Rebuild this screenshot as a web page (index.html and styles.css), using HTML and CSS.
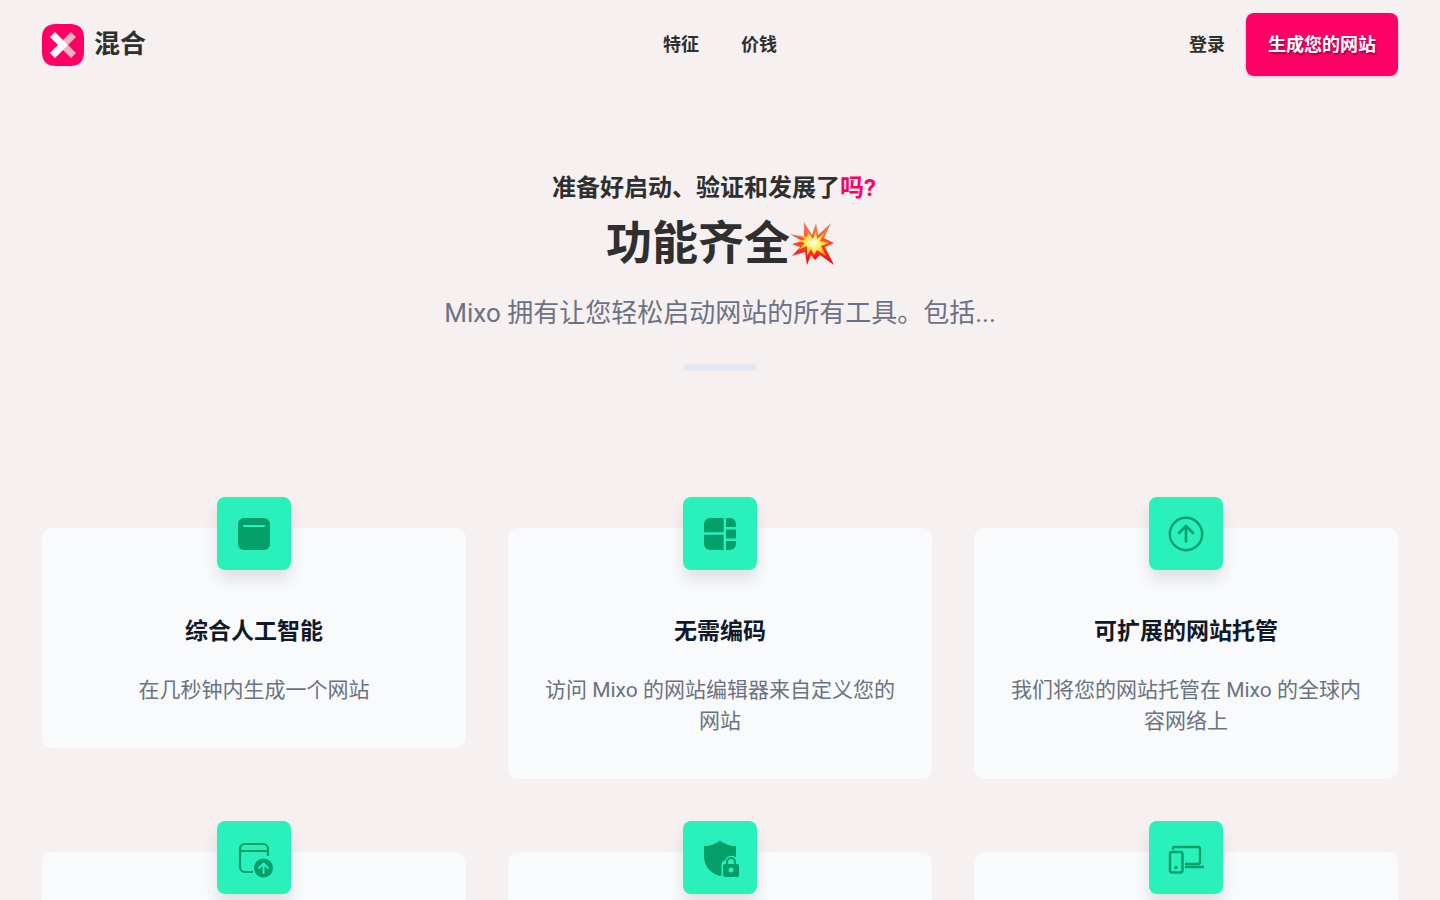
FILE: index.html
```html
<!DOCTYPE html>
<html lang="zh-CN">
<head>
    <meta charset="UTF-8">
    <meta name="viewport" content="width=device-width, initial-scale=1.0">
    <title>混合</title>
    <link rel="stylesheet" href="styles.css">
</head>
<body>
    <header class="header">
        <div class="header-side">
            <a class="logo" href="#">
                <svg class="logo-mark" viewBox="0 0 42 42" aria-hidden="true">
                    <path fill="#ff0065" d="M14 0h14Q42 0 42 14v14q0 14-14 14H14Q0 42 0 28V14Q0 0 14 0z"/>
                    <path fill="#f0b3bd" d="M29 8l5 5-8 8 8 8-5 5-13-13z"/>
                    <path fill="#fff" d="M13 8l13 13-13 13-5-5 8-8-8-8z"/>
                </svg>
                <span>混合</span>
            </a>
        </div>
        <nav class="nav">
            <a href="#">特征</a>
            <a href="#">价钱</a>
        </nav>
        <div class="header-side header-right">
            <a class="login" href="#">登录</a>
            <button class="btn" type="button">生成您的网站</button>
        </div>
    </header>

    <main>
        <section class="hero">
            <p class="hero-top">准备好启动、验证和发展了<span class="pink">吗?</span></p>
            <h1>功能齐全<svg class="boom" viewBox="0 0 44 46" aria-hidden="true">
                    <defs>
                        <linearGradient id="boomRed" x1="0" y1="0" x2="0" y2="1">
                            <stop offset="0" stop-color="#ee8560"/>
                            <stop offset=".5" stop-color="#fb4a22"/>
                            <stop offset="1" stop-color="#f5000c"/>
                        </linearGradient>
                        <radialGradient id="boomYellow">
                            <stop offset="0" stop-color="#fff"/>
                            <stop offset=".3" stop-color="#fff59a"/>
                            <stop offset=".65" stop-color="#ffdc2e"/>
                            <stop offset="1" stop-color="#ff9a2c"/>
                        </radialGradient>
                    </defs>
                    <path fill="url(#boomRed)" d="M14 2l8 13 4-12 2 12L41 3l-7 15 10 5-9 4 9 18-14-10-5 5-4-5-4 10-2-13-13 4 8-9-8-3 10-3L0 14l14 3z"/>
                    <path fill="url(#boomYellow)" d="M18 12l5 7 3-9 1 9 9-8-6 10 9 2-8 3 5 10-9-6-3 5-3-6-4 7 0-10-9 4 7-7-7-2 8-2-8-4 9 2z"/>
                </svg></h1>
            <p class="hero-text">Mixo 拥有让您轻松启动网站的所有工具。包括...</p>
            <div class="bar"></div>
        </section>

        <section class="features">
            <article class="card">
                <div class="icon">
                    <svg viewBox="0 0 40 40" aria-hidden="true">
                        <rect x="4" y="4" width="32" height="32" rx="6"/>
                        <path class="cut" stroke-width="2.200" stroke-linecap="round" d="M10 12h20"/>
                    </svg>
                </div>
                <h2>综合人工智能</h2>
                <p>在几秒钟内生成一个网站</p>
            </article>
            <article class="card">
                <div class="icon">
                    <svg viewBox="0 0 40 40" aria-hidden="true">
                        <rect x="4" y="4" width="32" height="32" rx="6"/>
                        <path class="cut" stroke-width="2.400" d="M24.800 3v34M3 19.500h21M25 14.200h12M25 25.800h12"/>
                    </svg>
                </div>
                <h2>无需编码</h2>
                <p>访问 Mixo 的网站编辑器来自定义您的网站</p>
            </article>
            <article class="card">
                <div class="icon">
                    <svg viewBox="0 0 40 40" aria-hidden="true">
                        <circle class="line" cx="20" cy="20" r="16.200" stroke-width="2.400"/>
                        <path class="line" stroke-width="2.600" stroke-linecap="round" stroke-linejoin="round" d="M20 27.500V12.500M13 19l7-7 7 7"/>
                    </svg>
                </div>
                <h2>可扩展的网站托管</h2>
                <p>我们将您的网站托管在 Mixo 的全球内容网络上</p>
            </article>
            <article class="card">
                <div class="icon">
                    <svg viewBox="0 0 40 40" aria-hidden="true">
                        <path class="line" stroke-width="2.200" d="M19 34h-8a5 5 0 0 1-5-5V11a5 5 0 0 1 5-5h18a5 5 0 0 1 5 5v7M6 13h28"/>
                        <circle cx="29.500" cy="30" r="9.500"/>
                        <path class="cut" stroke-width="2" stroke-linecap="round" stroke-linejoin="round" d="M29.500 35V25.500M25 30l4.500-4.500L34 30"/>
                    </svg>
                </div>
            </article>
            <article class="card">
                <div class="icon">
                    <svg viewBox="0 0 40 40" aria-hidden="true">
                        <path d="M20 2.500C24 6 30 8 36 8v10c0 10-6 17-16 20C10 35 4 28 4 18V8c6 0 12-2 16-5.500z"/>
                        <path class="gap" d="M21.500 40V27q0-4 3.500-4.500a6.500 6.500 0 0 1 12.500 0L41 24v16z"/>
                        <rect x="23" y="26" width="16" height="13" rx="2"/>
                        <path class="line" stroke-width="2" d="M27 27v-3a4 4 0 0 1 8 0v3"/>
                        <circle class="gap" cx="31" cy="32" r="2.500"/>
                    </svg>
                </div>
            </article>
            <article class="card">
                <div class="icon">
                    <svg viewBox="0 0 40 40" aria-hidden="true">
                        <rect class="line" x="4" y="14" width="12.500" height="20.500" rx="2" stroke-width="2.400"/>
                        <circle cx="10" cy="29.500" r="1.700"/>
                        <path class="line" stroke-width="2.300" d="M7 11.500V10q0-1 1-1h24q2 0 2 2v13q0 2-2 2H19M19 29h19"/>
                    </svg>
                </div>
            </article>
        </section>
    </main>
</body>
</html>
```
FILE: styles.css
```css
* {
    box-sizing: border-box;
}

body {
    margin: 0;
    height: 100vh;
    overflow: hidden;
    background: #f6f0f0;
    color: #2e2f2e;
    font-family: Roboto, "Noto Sans CJK SC", sans-serif;
    font-size: 21px;
    line-height: 31px;
}

h1, h2, p {
    margin: 0;
}

a {
    color: inherit;
    text-decoration: none;
}

.header {
    display: flex;
    align-items: center;
    padding: 13px 42px;
    font-size: 18px;
    font-weight: 700;
}

.header-side {
    flex: 1;
    display: flex;
    align-items: center;
}

.header-right {
    justify-content: flex-end;
    gap: 21px;
}

.logo {
    display: flex;
    align-items: center;
    gap: 10px;
    font-size: 26px;
}

.logo-mark {
    width: 42px;
    height: 42px;
}

.nav {
    display: flex;
    gap: 42px;
}

.btn {
    height: 63px;
    padding: 0 22px;
    border: 0;
    border-radius: 8px;
    background: #ff0065;
    box-shadow: 0 1px 3px rgba(0, 0, 0, .15);
    color: #fff;
    font: inherit;
    text-shadow: 1px 2px 2px rgba(0, 0, 0, .35);
}

.hero {
    display: flex;
    flex-direction: column;
    align-items: center;
    padding: 84px 42px 126px;
    text-align: center;
}

.hero-top {
    padding-right: 12px;
    font-size: 24px;
    font-weight: 700;
}

.pink {
    color: #ff0065;
}

.hero h1 {
    display: flex;
    align-items: center;
    margin-top: 8px;
    font-size: 46px;
    line-height: 62px;
}

.boom {
    width: 44px;
    height: 46px;
}

.hero-text {
    margin-top: 24px;
    color: #6b7285;
    font-size: 26px;
}

.bar {
    width: 74px;
    height: 7px;
    margin-top: 35px;
    border-radius: 4px;
    background: #e2e8f0;
}

.features {
    display: grid;
    grid-template-columns: repeat(3, 1fr);
    align-items: start;
    gap: 73px 42px;
    padding: 31px 42px 42px;
}

.card {
    min-height: 220px;
    padding: 0 31px 42px;
    border-radius: 10px;
    background: #f9fafc;
    text-align: center;
}

.icon {
    display: flex;
    align-items: center;
    justify-content: center;
    width: 74px;
    height: 73px;
    margin: -31px auto 0;
    border-radius: 8px;
    background: #2af0bb;
    box-shadow: 0 10px 15px rgba(0, 0, 0, .1);
}

.icon svg {
    width: 40px;
    height: 40px;
    overflow: visible;
    fill: #059f6a;
}

.icon .line {
    fill: none;
    stroke: #059f6a;
}

.icon .cut {
    fill: none;
    stroke: #2af0bb;
}

.icon .gap {
    fill: #2af0bb;
}

.card h2 {
    margin: 46px 0 28px;
    color: #111827;
    font-size: 23px;
    line-height: 31px;
}

.card p {
    color: #6b7280;
}
```
